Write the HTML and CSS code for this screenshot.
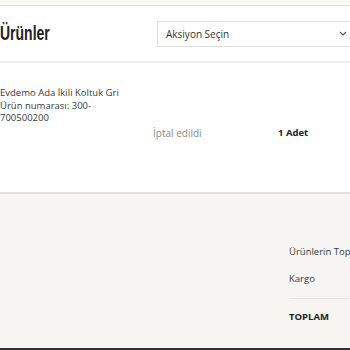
FILE: index.html
```html
<!DOCTYPE html>
<html lang="tr">
<head>
  <meta charset="UTF-8">
  <meta name="viewport" content="width=device-width, initial-scale=1">
  <title>Siparişlerim - Ürünler</title>
  <link rel="stylesheet" href="styles.css">
</head>
<body>

  <div class="top-strip"></div>

  <header class="products-head">
    <h2><span>Ürünler</span></h2>
    <div class="action-select">
      <span>Aksiyon Seçin</span>
      <svg class="chevron" width="8" height="5" viewBox="0 0 8 5">
        <path d="M1 1 L4 4 L7 1" fill="none" stroke="#555" stroke-width="1.1"/>
      </svg>
    </div>
  </header>

  <section class="product-row">
    <div class="product-info">
      <div class="product-name">Evdemo Ada İkili Koltuk Gri</div>
      <div class="product-code">Ürün numarası: 300-700500200</div>
    </div>
    <div class="status">İptal edildi</div>
    <div class="qty">1 Adet</div>
  </section>

  <section class="summary">
    <div class="summary-box">
      <div class="summary-line">Ürünlerin Toplamı</div>
      <div class="summary-line">Kargo</div>
      <div class="summary-line total">TOPLAM</div>
    </div>
  </section>

  <div class="bottom-bar"></div>

</body>
</html>
```

FILE: styles.css
```css
body {
  margin: 0;
  width: 350px;
  height: 350px;
  overflow: hidden;
  font-family: "Open Sans", Arial, sans-serif;
  color: #3a3a3a;
  background-color: #fff;
  display: flex;
  flex-direction: column;
}
.top-strip {
  flex: 0 0 5px;
  background-color: #f8f8f4;
  border-bottom: 1px solid #dedede;
}
.products-head {
  flex: 0 0 55px;
  display: flex;
  align-items: center;
  border-bottom: 2px solid #ececec;
}
.products-head h2 {
  flex: 0 0 157px;
  margin: 0;
  font-family: "Liberation Sans", Arial, sans-serif;
  font-size: 20px;
  font-weight: bold;
  color: #222;
}
.products-head h2 span {
  display: inline-block;
  transform: scaleX(0.7);
  transform-origin: left center;
}
.action-select {
  flex: 0 0 200px;
  height: 26px;
  box-sizing: border-box;
  border: 1px solid #ddd;
  display: flex;
  align-items: center;
  padding-left: 8px;
  font-size: 10px;
  color: #333;
}
.action-select .chevron {
  margin-left: 110px;
}
.product-row {
  flex: 0 0 129px;
  display: grid;
  grid-template-columns: 153px 125px 1fr;
  padding-top: 24px;
  box-sizing: border-box;
  font-size: 9.5px;
}
.product-info {
  width: 128px;
  line-height: 12.5px;
}
.status {
  padding-top: 39px;
  font-size: 10px;
  color: #8a8a8a;
}
.qty {
  padding-top: 39px;
  font-weight: bold;
  color: #222;
}
.summary {
  flex: 1;
  background-color: #f6f5f2;
  border-top: 2px solid #e2e2e2;
  padding-left: 289px;
  padding-top: 50px;
  font-size: 9.5px;
  overflow: hidden;
}
.summary-box {
  width: 100px;
}
.summary-line {
  height: 27px;
  line-height: 16px;
  white-space: nowrap;
}
.summary-line.total {
  border-top: 1px solid #e4e4e4;
  padding-top: 10px;
  font-weight: bold;
  color: #222;
}
.bottom-bar {
  flex: 0 0 2px;
  background-color: #333;
}
```
